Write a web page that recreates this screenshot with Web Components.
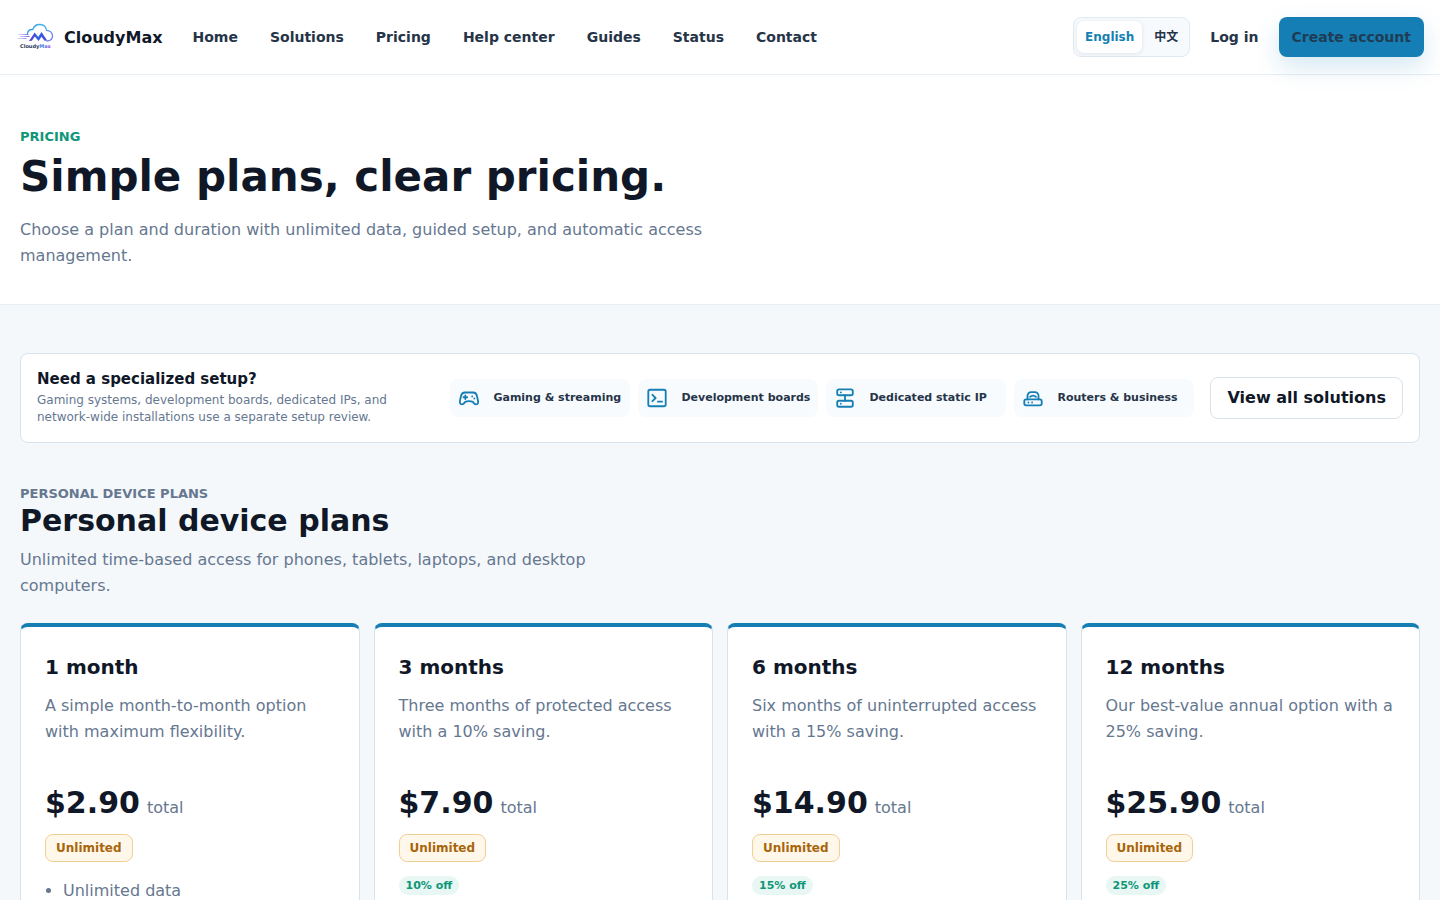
<!DOCTYPE html>
<html lang="en">
<head>
<meta charset="utf-8">
<meta name="viewport" content="width=device-width, initial-scale=1">
<title>CloudyMax - Pricing</title>
<style>
  :root {
    --ink: #101828;
    --text: #263448;
    --muted: #667790;
    --blue: #157fb5;
    --green: #0f9679;
    --line: #d8e3ec;
    --soft: #f4f8fb;
  }
  body {
    margin: 0;
    background: var(--soft);
    color: var(--ink);
    font-family: "DejaVu Sans", "Noto Sans CJK SC", sans-serif;
    font-size: 16px;
    line-height: 26px;
  }
  main { padding: 48px 20px; }
  .plans {
    display: grid;
    grid-template-columns: repeat(4, 1fr);
    gap: 14px;
    margin-top: 24px;
  }
  .chips {
    display: grid;
    grid-template-columns: repeat(4, 180px);
    gap: 8px;
  }
</style>
</head>
<body>
<cm-header>
  <cm-nav-link href="#home">Home</cm-nav-link>
  <cm-nav-link href="#solutions">Solutions</cm-nav-link>
  <cm-nav-link href="#pricing">Pricing</cm-nav-link>
  <cm-nav-link href="#help">Help center</cm-nav-link>
  <cm-nav-link href="#guides">Guides</cm-nav-link>
  <cm-nav-link href="#status">Status</cm-nav-link>
  <cm-nav-link href="#contact">Contact</cm-nav-link>
  <cm-language slot="actions"></cm-language>
  <cm-nav-link slot="actions" href="#login">Log in</cm-nav-link>
</cm-header>

<cm-hero>
  <span slot="eyebrow">PRICING</span>
  <span slot="title">Simple plans, clear pricing.</span>
  Choose a plan and duration with unlimited data, guided setup, and automatic access management.
</cm-hero>

<main>
  <cm-banner>
    <span slot="title">Need a specialized setup?</span>
    Gaming systems, development boards, dedicated IPs, and network-wide installations use a separate setup review.
    <div class="chips" slot="chips">
      <cm-chip icon="gamepad">Gaming &amp; streaming</cm-chip>
      <cm-chip icon="terminal">Development boards</cm-chip>
      <cm-chip icon="server">Dedicated static IP</cm-chip>
      <cm-chip icon="router">Routers &amp; business</cm-chip>
    </div>
  </cm-banner>

  <cm-section-heading>
    <span slot="eyebrow">PERSONAL DEVICE PLANS</span>
    <span slot="title">Personal device plans</span>
    Unlimited time-based access for phones, tablets, laptops, and desktop computers.
  </cm-section-heading>

  <div class="plans">
    <cm-plan name="1 month" price="$2.90">
      A simple month-to-month option with maximum flexibility.
      <cm-feature slot="extra">Unlimited data</cm-feature>
    </cm-plan>
    <cm-plan name="3 months" price="$7.90">
      Three months of protected access with a 10% saving.
      <cm-discount slot="extra">10% off</cm-discount>
    </cm-plan>
    <cm-plan name="6 months" price="$14.90">
      Six months of uninterrupted access with a 15% saving.
      <cm-discount slot="extra">15% off</cm-discount>
    </cm-plan>
    <cm-plan name="12 months" price="$25.90">
      Our best-value annual option with a 25% saving.
      <cm-discount slot="extra">25% off</cm-discount>
    </cm-plan>
  </div>
</main>

<script>
// Base class: open shadow root filled from template()
class CmElement extends HTMLElement {
  connectedCallback() {
    if (this.shadowRoot) return;
    this.attachShadow({ mode: 'open' });
    this.shadowRoot.innerHTML = this.template();
  }
}

class CmLogo extends CmElement {
  template() {
    return `
      <style>
        :host { display: block; width: 40px; height: 40px; }
        svg { display: block; }
      </style>
      <svg width="40" height="40" viewBox="0 0 40 40" fill="none" aria-hidden="true">
        <defs>
          <linearGradient id="cloud" x1="12" y1="8" x2="37" y2="24" gradientUnits="userSpaceOnUse">
            <stop offset="0" stop-color="#2f8fe6"/>
            <stop offset=".45" stop-color="#45b9ec"/>
            <stop offset="1" stop-color="#7a6ff0"/>
          </linearGradient>
          <linearGradient id="peak" x1="14" y1="0" x2="31" y2="0" gradientUnits="userSpaceOnUse">
            <stop offset="0" stop-color="#5b3fd6"/>
            <stop offset=".5" stop-color="#2b62e0"/>
            <stop offset="1" stop-color="#5146dc"/>
          </linearGradient>
          <linearGradient id="speed" x1="1" y1="0" x2="13" y2="0" gradientUnits="userSpaceOnUse">
            <stop offset="0" stop-color="#8f86ea" stop-opacity=".3"/>
            <stop offset="1" stop-color="#5146dc"/>
          </linearGradient>
          <linearGradient id="max" x1="22" y1="0" x2="36" y2="0" gradientUnits="userSpaceOnUse">
            <stop offset="0" stop-color="#2f8fe6"/>
            <stop offset="1" stop-color="#8a4be0"/>
          </linearGradient>
        </defs>
        <path d="M11.500 16.500c.3-2.700 2.500-4.200 5.300-4 1.200-3.400 4-5.200 7.300-5 3.500.2 6 2.600 6.400 5.800 3.400.3 6 2.500 6 5.500 0 3-2.200 5-5.400 5.200" stroke="url(#cloud)" stroke-width="1.300" stroke-linecap="round"/>
        <path d="M13 24l5.700-8.500 3.500 4.500 3.300-5 5.700 8.500-2.700.2-3-4-2.900 4.300-3.800-4.500-2.900 4.300z" fill="url(#peak)"/>
        <path d="M2 17.500h10.500M4 19.500h9.500M1 21.500h9.500" stroke="url(#speed)" stroke-width=".8"/>
        <text x="4" y="31" font-size="5" font-weight="700" fill="#233252">Cloudy<tspan fill="url(#max)">Max</tspan></text>
      </svg>`;
  }
}

class CmNavLink extends CmElement {
  template() {
    return `
      <style>
        :host { display: block; font-size: 14px; font-weight: 700; line-height: 24px; white-space: nowrap; }
        a { color: var(--text); text-decoration: none; }
        a:hover { color: var(--blue); }
      </style>
      <a href="${this.getAttribute('href')}"><slot></slot></a>`;
  }
}

class CmLanguage extends CmElement {
  template() {
    return `
      <style>
        :host {
          display: flex;
          padding: 3px;
          border: 1px solid #e2eaf1;
          border-radius: 8px;
          background: #f7fafd;
        }
        button {
          height: 32px;
          padding: 0 8px;
          border: 0;
          border-radius: 7px;
          background: none;
          color: var(--text);
          font: inherit;
          font-size: 12px;
          font-weight: 700;
          cursor: pointer;
        }
        button + button { padding: 0 8px 0 12px; }
        button[aria-pressed="true"] {
          background: #fff;
          color: var(--blue);
          box-shadow: 0 1px 4px rgba(16, 24, 40, .1);
        }
      </style>
      <button type="button" aria-pressed="true">English</button>
      <button type="button" aria-pressed="false" lang="zh">中文</button>`;
  }

  connectedCallback() {
    super.connectedCallback();
    const buttons = this.shadowRoot.querySelectorAll('button');
    buttons.forEach(b => {
      b.onclick = () => buttons.forEach(o => o.setAttribute('aria-pressed', String(o === b)));
    });
  }
}

class CmHeader extends CmElement {
  template() {
    return `
      <style>
        :host { display: block; background: #fff; border-bottom: 1px solid #e6edf3; }
        header { display: flex; align-items: center; padding: 17px 16px; }
        .brand {
          display: flex;
          align-items: center;
          gap: 8px;
          color: var(--ink);
          font-weight: 700;
          line-height: 27px;
          text-decoration: none;
        }
        nav { display: flex; gap: 32px; margin-left: 30px; }
        .actions { display: flex; align-items: center; gap: 20px; margin-left: auto; }
        .cta {
          padding: 0 13px;
          border-radius: 8px;
          background: var(--blue);
          color: #1f3c54;
          font-size: 14px;
          font-weight: 700;
          line-height: 40px;
          text-decoration: none;
          white-space: nowrap;
          box-shadow: 0 10px 24px rgba(21, 127, 181, .18);
        }
      </style>
      <header>
        <a class="brand" href="#home"><cm-logo></cm-logo>CloudyMax</a>
        <nav><slot></slot></nav>
        <div class="actions">
          <slot name="actions"></slot>
          <a class="cta" href="#register">Create account</a>
        </div>
      </header>`;
  }
}

class CmHero extends CmElement {
  template() {
    return `
      <style>
        :host { display: block; padding: 52px 20px 35px; background: #fff; border-bottom: 1px solid #e6edf3; }
        .eyebrow { color: var(--green); font-size: 13px; font-weight: 700; line-height: 20px; }
        h1 { margin: 4px 0 14px; font-size: 42px; line-height: 52px; }
        p { max-width: 720px; margin: 0; color: var(--muted); }
      </style>
      <div class="eyebrow"><slot name="eyebrow"></slot></div>
      <h1><slot name="title"></slot></h1>
      <p><slot></slot></p>`;
  }
}

class CmBanner extends CmElement {
  template() {
    return `
      <style>
        :host {
          display: flex;
          align-items: center;
          gap: 16px;
          padding: 16px;
          border: 1px solid var(--line);
          border-radius: 8px;
          background: #fff;
        }
        .copy { flex: 1; }
        h2 { margin: 0; font-size: 15px; line-height: 18px; }
        p { max-width: 380px; margin: 4px 0 0; color: var(--muted); font-size: 12px; line-height: 17px; }
        a {
          padding: 0 16px;
          border: 1px solid var(--line);
          border-radius: 8px;
          color: var(--ink);
          font-weight: 700;
          line-height: 40px;
          text-decoration: none;
          white-space: nowrap;
        }
      </style>
      <div class="copy">
        <h2><slot name="title"></slot></h2>
        <p><slot></slot></p>
      </div>
      <slot name="chips"></slot>
      <a href="#solutions">View all solutions</a>`;
  }
}

const ICONS = {
  gamepad: `
    <path d="M7.500 6h9c2.400 0 3.700 1.600 4.200 3.900l1.200 5.300c.5 2.400-.7 3.800-2.300 3.800-1.100 0-2-.6-2.700-1.700l-.6-1c-2.700-1.200-5.900-1.200-8.600 0l-.6 1C6.400 18.400 5.500 19 4.400 19c-1.600 0-2.800-1.400-2.300-3.800l1.200-5.300C3.800 7.600 5.100 6 7.500 6z"/>
    <path d="M8 9.200v4M6 11.200h4M15.500 10.200v.1M17.800 12.400v.1"/>`,
  terminal: `
    <rect x="2.500" y="3" width="19" height="18" rx="2"/>
    <path d="M7 8.500l3.500 3.500L7 15.500M13 16h4.500"/>`,
  server: `
    <rect x="3.500" y="2.500" width="17" height="6.500" rx="2"/>
    <rect x="3.500" y="15" width="17" height="6.500" rx="2"/>
    <path d="M12 9v6M7.500 5.800v.1M7.500 18.200v.1"/>`,
  router: `
    <rect x="2.500" y="13.500" width="19" height="6.500" rx="2"/>
    <path d="M6 13.500V9.500a4 4 0 0 1 4-4h4a4 4 0 0 1 4 4v4M8.800 10.800c1.800-1.800 4.600-1.800 6.400 0M7 16.800v.1M11 16.800v.1"/>`
};

class CmChip extends CmElement {
  template() {
    return `
      <style>
        :host {
          display: flex;
          align-items: center;
          gap: 13px;
          height: 38px;
          padding: 0 8px;
          border-radius: 8px;
          background: #f8fbfe;
          color: var(--text);
          font-size: 11px;
          font-weight: 700;
          line-height: 16px;
          white-space: nowrap;
          box-sizing: border-box;
        }
        svg {
          flex: none;
          fill: none;
          stroke: var(--blue);
          stroke-width: 2;
          stroke-linecap: round;
          stroke-linejoin: round;
        }
      </style>
      <svg width="22" height="22" viewBox="0 0 24 24" aria-hidden="true">${ICONS[this.getAttribute('icon')]}</svg>
      <span><slot></slot></span>`;
  }
}

class CmSectionHeading extends CmElement {
  template() {
    return `
      <style>
        :host { display: block; margin-top: 42px; }
        .eyebrow { color: var(--muted); font-size: 13px; font-weight: 700; line-height: 18px; }
        h2 { margin: 0 0 8px; font-size: 30px; line-height: 36px; }
        p { max-width: 620px; margin: 0; color: var(--muted); }
      </style>
      <div class="eyebrow"><slot name="eyebrow"></slot></div>
      <h2><slot name="title"></slot></h2>
      <p><slot></slot></p>`;
  }
}

class CmPlan extends CmElement {
  template() {
    return `
      <style>
        :host {
          display: block;
          padding: 24px;
          border: 1px solid var(--line);
          border-top: 4px solid var(--blue);
          border-radius: 8px;
          background: #fff;
        }
        h3 { margin: 0 0 10px; font-size: 20px; line-height: 32px; }
        p { min-height: 78px; margin: 0; color: var(--muted); }
        .price { display: flex; align-items: baseline; gap: 7px; margin-top: 14px; color: var(--muted); }
        .price strong { color: var(--ink); font-size: 30px; line-height: 36px; }
        .badge {
          display: inline-block;
          margin: 13px 0 14px;
          padding: 0 10px;
          border: 1px solid #f0cf94;
          border-radius: 8px;
          background: #fff8ea;
          color: #a8650a;
          font-size: 12px;
          font-weight: 700;
          line-height: 26px;
          vertical-align: top;
        }
      </style>
      <h3>${this.getAttribute('name')}</h3>
      <p><slot></slot></p>
      <div class="price"><strong>${this.getAttribute('price')}</strong>total</div>
      <div><span class="badge">Unlimited</span></div>
      <slot name="extra"></slot>`;
  }
}

class CmFeature extends CmElement {
  template() {
    return `
      <style>
        :host { display: block; color: var(--muted); }
        ul { margin: 2px 0 0; padding-left: 18px; }
      </style>
      <ul><li><slot></slot></li></ul>`;
  }
}

class CmDiscount extends CmElement {
  template() {
    return `
      <style>
        :host {
          display: inline-block;
          padding: 0 7px;
          border-radius: 10px;
          background: #e8f7f3;
          color: var(--green);
          font-size: 11px;
          font-weight: 700;
          line-height: 19px;
          vertical-align: top;
        }
      </style>
      <slot></slot>`;
  }
}

customElements.define('cm-logo', CmLogo);
customElements.define('cm-nav-link', CmNavLink);
customElements.define('cm-language', CmLanguage);
customElements.define('cm-header', CmHeader);
customElements.define('cm-hero', CmHero);
customElements.define('cm-banner', CmBanner);
customElements.define('cm-chip', CmChip);
customElements.define('cm-section-heading', CmSectionHeading);
customElements.define('cm-plan', CmPlan);
customElements.define('cm-feature', CmFeature);
customElements.define('cm-discount', CmDiscount);
</script>
</body>
</html>
